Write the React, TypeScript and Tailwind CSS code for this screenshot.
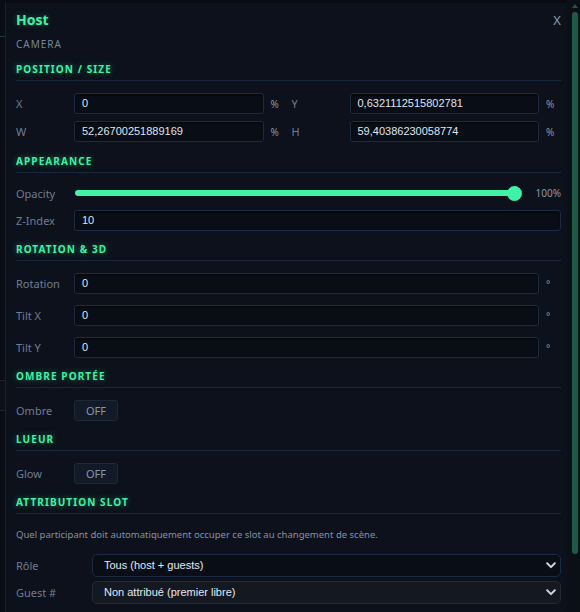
import React from 'react'

const label = "text-[11px] text-[#6f7d93] leading-none"
const inputCls = "h-[21px] flex-1 min-w-0 bg-[#090d15] border border-[#1c2a42] rounded-[3px] pl-[7px] flex items-center text-[11px] text-[#dde6f3] font-['Liberation_Sans',Arial,sans-serif] shadow-[inset_0_1px_2px_rgba(0,0,0,0.6)]"

function Section({ title, children, mt = 'mt-[12px]' }: { title: string; children: React.ReactNode; mt?: string }) {
    return (
        <div className={mt}>
            <div className='pb-[5px] border-b border-[#1a263b]'>
                <p className="text-[10px] leading-[12px] font-bold tracking-[1.1px] text-[#3ff2a5] [text-shadow:0_0_6px_rgba(60,240,160,0.45)]">{title}</p>
            </div>
            {children}
        </div>
    )
}

function Field({ name, value, unit, labelW = 'w-[58px]' }: { name: string; value: string; unit?: string; labelW?: string }) {
    return (
        <div className='flex flex-row items-center'>
            <span className={`${labelW} ${label}`}>{name}</span>
            <div className={inputCls}>{value}</div>
            {unit !== undefined && <span className='w-[22px] pl-[7px] text-[10px] text-[#8d97a6] leading-none'>{unit}</span>}
        </div>
    )
}

function Toggle({ name }: { name: string }) {
    return (
        <div className='flex flex-row items-center mt-[12px]'>
            <span className={`w-[58px] ${label}`}>{name}</span>
            <div className='w-[44px] h-[21px] rounded-[3px] bg-[#131a27] border border-[#1d2838] flex items-center justify-center text-[11px] text-[#8897ad] leading-none'>OFF</div>
        </div>
    )
}

function Chevron() {
    return (
        <svg width="10" height="7" viewBox="0 0 10 7" fill="none">
            <path d="M1.2 1.3 L5 5.1 L8.8 1.3" stroke="#c9d3e0" strokeWidth="2" strokeLinecap="round" strokeLinejoin="round" />
        </svg>
    )
}

function Select({ name, value, alt }: { name: string; value: string; alt?: boolean }) {
    return (
        <div className='flex flex-row items-center'>
            <span className={`w-[76px] ${label}`}>{name}</span>
            <div className={`flex-1 h-[23px] rounded-[5px] border flex items-center justify-between pl-[11px] pr-[4px] text-[11px] text-[#e3e9f2] font-['Liberation_Sans',Arial,sans-serif] ${alt ? 'bg-[#131821] border-[#232a36]' : 'bg-[#090d15] border-[#1c2a42]'}`}>
                <span>{value}</span>
                <Chevron />
            </div>
        </div>
    )
}

export default function App() {
    return (
        <div className="h-[612px] w-[580px] overflow-hidden flex flex-row bg-[#0a0e14] font-['Noto_Sans','Open_Sans',sans-serif]">
            {/* left backdrop strip */}
            <div className='w-[5px] flex flex-col'>
                <div className='h-[36px]' />
                <div className='h-px bg-[#16402d]' />
                <div className='h-[343px]' />
                <div className='h-px bg-[#1a2230]' />
                <div className='h-[29px] bg-[#0c1118]' />
                <div className='h-px bg-[#1a2230]' />
            </div>
            <div className='w-[562px] h-full bg-[#0c111b] border-l border-[#182130] border-t-[3px] border-t-[#080b11] pl-[10px] pr-[6px] flex flex-col'>
                <div className='flex flex-row justify-between items-center h-[18px] mt-[8px]'>
                    <p className="text-[14px] leading-[18px] font-bold text-[#3ff2a5] [text-shadow:0_0_6px_rgba(60,240,160,0.35)]">Host</p>
                    <span className="text-[12px] leading-[18px] text-[#8ea0bb] font-['Liberation_Sans',Arial,sans-serif] pt-[2px]">X</span>
                </div>
                <p className='mt-[9px] text-[10px] leading-[12px] tracking-[1px] text-[#7b8698]'>CAMERA</p>

                <Section title="POSITION / SIZE" mt='mt-[13px]'>
                    <div className='grid grid-cols-2 gap-x-[6px] gap-y-[7px] mt-[12px]'>
                        <Field name="X" value="0" unit="%" />
                        <Field name="Y" value="0,6321112515802781" unit="%" />
                        <Field name="W" value="52,26700251889169" unit="%" />
                        <Field name="H" value="59,40386230058774" unit="%" />
                    </div>
                </Section>

                <Section title="APPEARANCE" mt='mt-[13px]'>
                    <div className='flex flex-row items-center mt-[11px] h-[18px]'>
                        <span className={`w-[59px] ${label}`}>Opacity</span>
                        <div className='flex-1 flex flex-row items-center'>
                            <div className='flex-1 h-[6px] rounded-full bg-[#40f2a8]' />
                            <div className='w-[15px] h-[15px] rounded-full bg-[#40f2a8] -ml-[7px]' />
                        </div>
                        <span className='w-[39px] text-right text-[10px] text-[#8d97a6] leading-none'>100%</span>
                    </div>
                    <div className='mt-[8px]'>
                        <Field name="Z-Index" value="10" />
                    </div>
                </Section>

                <Section title="ROTATION & 3D">
                    <div className='flex flex-col gap-[11px] mt-[12px]'>
                        <Field name="Rotation" value="0" unit="°" />
                        <Field name="Tilt X" value="0" unit="°" />
                        <Field name="Tilt Y" value="0" unit="°" />
                    </div>
                </Section>

                <Section title="OMBRE PORTÉE">
                    <Toggle name="Ombre" />
                </Section>

                <Section title="LUEUR">
                    <Toggle name="Glow" />
                </Section>

                <Section title="ATTRIBUTION SLOT">
                    <p className='mt-[15px] text-[9.5px] leading-[12px] text-[#8592a5]'>Quel participant doit automatiquement occuper ce slot au changement de scène.</p>
                    <div className='flex flex-col gap-[4px] mt-[13px]'>
                        <Select name="Rôle" value="Tous (host + guests)" />
                        <Select name="Guest #" value="Non attribué (premier libre)" alt />
                    </div>
                </Section>
            </div>
            {/* scrollbar */}
            <div className='w-[13px] h-full flex flex-col items-center pl-[3px] bg-[#0b0f16]'>
                <div className='mt-[4px] w-0 h-0 border-l-[3px] border-r-[3px] border-b-[4px] border-l-transparent border-r-transparent border-b-[#1f5c47]' />
                <div className='mt-[4px] w-[6px] h-[542px] rounded-full bg-[#1e5b46]' />
            </div>
        </div>
    )
}
